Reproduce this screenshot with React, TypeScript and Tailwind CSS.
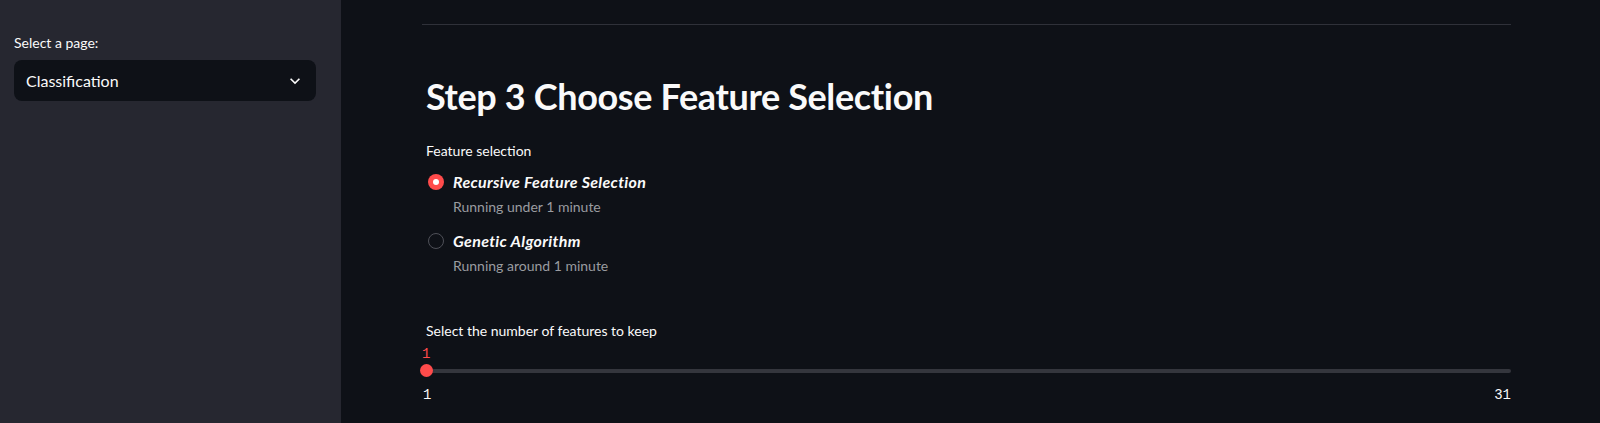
import { useState } from 'react';

const FONT = 'font-["Lato","Noto_Sans",sans-serif]';

function ExpandMore() {
  return (
    <svg viewBox="0 0 24 24" className="h-5 w-5 fill-[#fafafa]">
      <path d="M16.59 8.59L12 13.17 7.41 8.59 6 10l6 6 6-6z" />
    </svg>
  );
}

const OPTIONS = [
  { label: 'Recursive Feature Selection', caption: 'Running under 1 minute' },
  { label: 'Genetic Algorithm', caption: 'Running around 1 minute' },
];

export default function App() {
  const [choice, setChoice] = useState(0);

  return (
    <div className={`flex h-[423px] w-[1600px] overflow-hidden bg-[#0e1117] text-[#fafafa] ${FONT}`}>
      {/* sidebar */}
      <aside className="w-[341px] shrink-0 bg-[#262730] px-[14px] pt-[33px]">
        <div className="h-[20px] text-[14px] leading-[20px]">Select a page:</div>
        <div className="mt-[7px] flex h-[41px] w-[302px] items-center justify-between rounded-lg bg-[#0e1117] pl-[12px] pr-[11px]">
          <span className="text-[16px]">Classification</span>
          <ExpandMore />
        </div>
      </aside>

      {/* main */}
      <main className="flex-1 pl-[81px] pr-[89px] pt-[24px]">
        <div className="h-px w-full bg-[#2f3139]" />

        <h2 className="mt-[50px] h-[43px] pl-[4px] text-[36px] font-bold leading-[43px] tracking-[-0.01em]">
          Step 3 Choose Feature Selection
        </h2>

        <div className="mt-[23px] h-[20px] pl-[4px] text-[14px] leading-[20px]">Feature selection</div>

        <div className="mt-[9px] flex flex-col">
          {OPTIONS.map((o, i) => (
            <div key={o.label} className={i === 0 ? '' : 'mt-[12px]'} onClick={() => setChoice(i)}>
              <div className="flex h-[24px] items-center gap-[9px] pl-[6px]">
                {choice === i ? (
                  <span className="flex h-[16px] w-[16px] items-center justify-center rounded-full bg-[#ff4b4b]">
                    <span className="h-[6px] w-[6px] rounded-full bg-white" />
                  </span>
                ) : (
                  <span className="h-[16px] w-[16px] rounded-full border-[1.5px] border-[#4e5058]" />
                )}
                <span className="text-[16px] font-bold italic leading-[24px] tracking-[0.02em]">{o.label}</span>
              </div>
              <div className="mt-[3px] h-[20px] pl-[31px] text-[14px] leading-[20px] text-[#9a9ca0]">
                {o.caption}
              </div>
            </div>
          ))}
        </div>

        <div className="mt-[45px] h-[20px] pl-[4px] text-[14px] leading-[20px]">
          Select the number of features to keep
        </div>

        <div className='mt-[5px] h-[16px] font-["Liberation_Mono",monospace] text-[14px] leading-[16px] text-[#ff4b4b]'>
          1
        </div>

        <div className="relative mt-[2px] h-[13px]">
          <div className="absolute left-0 right-0 top-[4.5px] h-[4px] rounded-full bg-[#34363d]" />
          <div className="absolute left-[-2px] top-0 h-[13px] w-[13px] rounded-full bg-[#ff4b4b]" />
        </div>

        <div className='mt-[10px] flex h-[16px] justify-between pl-[1px] font-["Liberation_Mono",monospace] text-[14px] leading-[16px] text-[#fafafa]'>
          <span>1</span>
          <span>31</span>
        </div>
      </main>
    </div>
  );
}
